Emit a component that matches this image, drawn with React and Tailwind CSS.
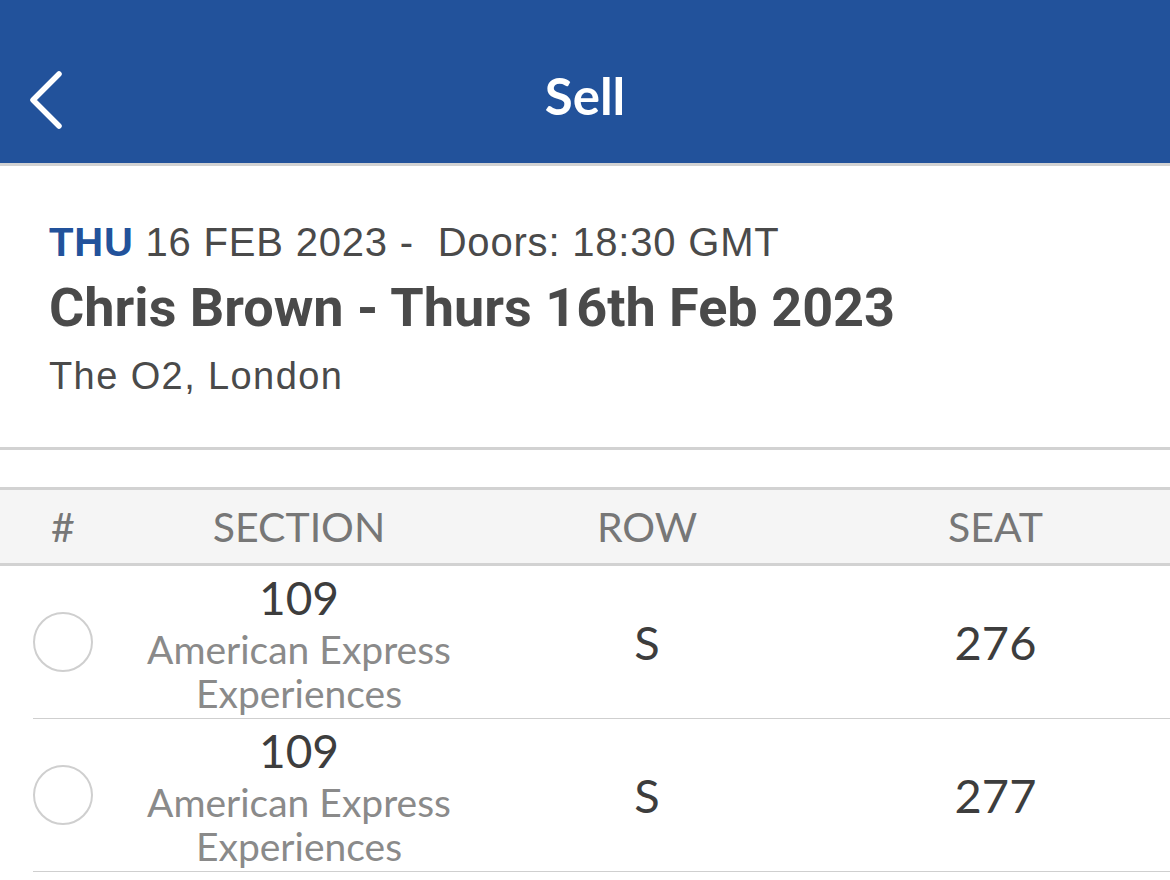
const seats = [
  { section: '109', row: 'S', seat: '276' },
  { section: '109', row: 'S', seat: '277' },
]

function BackChevron() {
  return (
    <svg width="40" height="60" viewBox="0 0 40 60" fill="none">
      <path d="M34 4 L8 30 L34 56" stroke="white" strokeWidth="5.5" strokeLinecap="round" strokeLinejoin="round" />
    </svg>
  )
}

function Radio() {
  return <div className="w-[60px] h-[60px] rounded-full border-2 border-[#cfcfcf]" />
}

export default function App() {
  return (
    <div className="w-[1170px] h-[880px] bg-white overflow-hidden font-['Lato',sans-serif]">
      {/* top bar */}
      <div className="relative h-[163px] bg-[#22529b] flex justify-center border-b-[3px] border-[#d2d2d2] box-content">
        <div className="absolute left-[25px] top-[70px]">
          <BackChevron />
        </div>
        <h1 className="mt-[66px] text-white text-[51px] leading-[60px] font-bold">Sell</h1>
      </div>

      {/* event details */}
      <div className="h-[284px] px-[49px] pt-[52px] border-b-[3px] border-[#d2d2d2] text-[#4a4a4a]">
        <p className="text-[40px] leading-[48px] tracking-[0.8px] font-['Liberation_Sans',sans-serif]">
          <span className="font-bold text-[#22529b]">THU</span> 16 FEB 2023 - &nbsp;Doors: 18:30 GMT
        </p>
        <p className="mt-[12px] text-[54px] leading-[60px] font-bold font-['Roboto',sans-serif]">Chris Brown - Thurs 16th Feb 2023</p>
        <p className="mt-[16px] text-[38px] leading-[44px] tracking-[1.4px] font-['Liberation_Sans',sans-serif]">The O2, London</p>
      </div>

      {/* seats table */}
      <div className="mt-[37px]">
        <div className="grid grid-cols-[125px_348px_348px_1fr] items-center h-[79px] bg-[#f5f5f5] border-y-[3px] border-[#d2d2d2] text-[41px] text-[#777]">
          <span className="pl-[51px]">#</span>
          <span className="text-center">SECTION</span>
          <span className="text-center">ROW</span>
          <span className="text-center">SEAT</span>
        </div>
        {seats.map((s, i) => (
          <div key={i} className="ml-[33px] grid grid-cols-[92px_348px_348px_1fr] items-center h-[153px] border-b border-[#cfcfcf]">
            <Radio />
            <div className="self-start pt-[7px] text-center">
              <div className="text-[46px] leading-[50px] text-[#3d3d3d]">{s.section}</div>
              <div className="mt-[4px] text-[39px] leading-[44px] text-[#8a8a8a]">
                American Express<br />Experiences
              </div>
            </div>
            <div className="text-center text-[47px] text-[#3d3d3d]">{s.row}</div>
            <div className="text-center text-[47px] text-[#3d3d3d]">{s.seat}</div>
          </div>
        ))}
      </div>
    </div>
  )
}
